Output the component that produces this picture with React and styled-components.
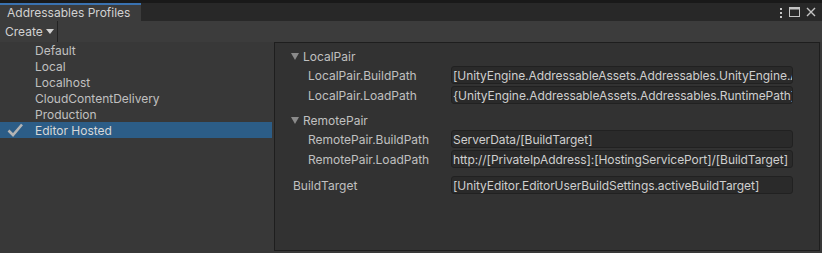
import React from 'react'
import styled, { createGlobalStyle } from 'styled-components'

const GlobalStyle = createGlobalStyle`
  html, body {
    margin: 0;
    padding: 0;
    background: #383838;
    overflow: hidden;
  }
  body {
    font-family: Inter, "Noto Sans", "Liberation Sans", sans-serif;
    font-size: 12px;
    color: #c0c0c0;
  }
`

const Window = styled.div`
  width: 822px;
  height: 253px;
  display: flex;
  flex-direction: column;
  background: #383838;
  border-top: 3px solid #191919;
  box-sizing: border-box;
`

const TabBar = styled.div`
  height: 18px;
  display: flex;
  align-items: stretch;
  background: #282828;
`

const Tab = styled.div`
  width: 141px;
  box-sizing: border-box;
  border-top: 2px solid #3a72b0;
  background: #3c3c3c;
  padding-left: 7px;
  display: flex;
  align-items: center;
  color: #d2d2d2;
  line-height: 1;
`

const TabIcons = styled.div`
  margin-left: auto;
  display: flex;
  align-items: center;
  gap: 6px;
  padding-right: 6px;
`

const Toolbar = styled.div`
  height: 21px;
  display: flex;
  background: #3c3c3c;
`

const ToolButton = styled.div`
  width: 58px;
  box-sizing: border-box;
  border-right: 1px solid #232323;
  padding-left: 5px;
  display: flex;
  align-items: center;
  gap: 3px;
  color: #d2d2d2;
`

const Body = styled.div`
  flex: 1;
  display: flex;
  min-height: 0;
`

const List = styled.div`
  width: 272px;
  display: flex;
  flex-direction: column;
`

const Row = styled.div`
  height: 16px;
  display: flex;
  align-items: center;
  padding-left: 35px;
  position: relative;
  background: ${p => (p.selected ? '#2c5d87' : 'transparent')};
  color: ${p => (p.selected ? '#d8d8d8' : '#c0c0c0')};
`

const Check = styled.svg`
  position: absolute;
  left: 6px;
  top: 1px;
`

const Panel = styled.div`
  margin-left: 2px;
  flex: 1;
  margin-right: 2px;
  margin-bottom: 2px;
  background: #323232;
  border: 1px solid #1e1e1e;
  padding: 4px 26px 0 16px;
  display: flex;
  flex-direction: column;
`

const GroupHeader = styled.div`
  height: 18px;
  display: flex;
  align-items: center;
  gap: 4px;
  margin-top: ${p => (p.first ? '0' : '6px')};
`

const Prop = styled.div`
  height: 20px;
  display: grid;
  grid-template-columns: ${p => (p.indent ? '143px' : '158px')} 1fr;
  align-items: center;
  padding-left: ${p => (p.indent ? '17px' : '2px')};
  margin-top: ${p => (p.gap ? '6px' : '0')};
`

const Field = styled.div`
  height: 18px;
  box-sizing: border-box;
  background: #2a2a2a;
  border: 1px solid #212121;
  border-radius: 3px;
  padding-left: 1px;
  display: flex;
  align-items: center;
  white-space: nowrap;
  overflow: hidden;
  letter-spacing: -0.07px;
  color: #cfcfcf;
`

const profiles = ['Default', 'Local', 'Localhost', 'CloudContentDelivery', 'Production', 'Editor Hosted']

const Tri = () => (
  <svg width="8" height="8" viewBox="0 0 8 8">
    <path d="M0 1 L8 1 L4 8 Z" fill="#8a8a8a" />
  </svg>
)

export default function App() {
  return (
    <Window>
      <GlobalStyle />
      <TabBar>
        <Tab>Addressables Profiles</Tab>
        <TabIcons>
          <svg width="4" height="11" viewBox="0 0 4 11">
            <rect x="1" y="1" width="2" height="2" fill="#c4c4c4" />
            <rect x="1" y="5" width="2" height="2" fill="#c4c4c4" />
            <rect x="1" y="9" width="2" height="2" fill="#c4c4c4" />
          </svg>
          <svg width="11" height="10" viewBox="0 0 11 10">
            <rect x="0.5" y="0.5" width="10" height="9" fill="none" stroke="#c4c4c4" />
            <rect x="0.5" y="0.5" width="10" height="2" fill="#c4c4c4" />
          </svg>
          <svg width="10" height="10" viewBox="0 0 10 10">
            <path d="M1 1 L9 9 M9 1 L1 9" stroke="#c4c4c4" strokeWidth="1.4" />
          </svg>
        </TabIcons>
      </TabBar>
      <Toolbar>
        <ToolButton>
          Create
          <svg width="8" height="6" viewBox="0 0 8 6">
            <path d="M0 0 L8 0 L4 5 Z" fill="#d2d2d2" />
          </svg>
        </ToolButton>
      </Toolbar>
      <Body>
        <List>
          {profiles.map(p => (
            <Row key={p} selected={p === 'Editor Hosted'}>
              {p === 'Editor Hosted' && (
                <Check width="18" height="14" viewBox="0 0 18 14">
                  <path d="M2.5 7.5 L7 12 L16 1.5" fill="none" stroke="#b4b4b4" strokeWidth="2.6" />
                </Check>
              )}
              {p}
            </Row>
          ))}
        </List>
        <Panel>
          <GroupHeader first>
            <Tri />
            LocalPair
          </GroupHeader>
          <Prop indent>
            <span>LocalPair.BuildPath</span>
            <Field>[UnityEngine.AddressableAssets.Addressables.UnityEngine.A</Field>
          </Prop>
          <Prop indent>
            <span>LocalPair.LoadPath</span>
            <Field>{'{UnityEngine.AddressableAssets.Addressables.RuntimePath},'}</Field>
          </Prop>
          <GroupHeader>
            <Tri />
            RemotePair
          </GroupHeader>
          <Prop indent>
            <span>RemotePair.BuildPath</span>
            <Field>ServerData/[BuildTarget]</Field>
          </Prop>
          <Prop indent>
            <span>RemotePair.LoadPath</span>
            <Field>http://[PrivateIpAddress]:[HostingServicePort]/[BuildTarget]</Field>
          </Prop>
          <Prop gap>
            <span>BuildTarget</span>
            <Field>[UnityEditor.EditorUserBuildSettings.activeBuildTarget]</Field>
          </Prop>
        </Panel>
      </Body>
    </Window>
  )
}
